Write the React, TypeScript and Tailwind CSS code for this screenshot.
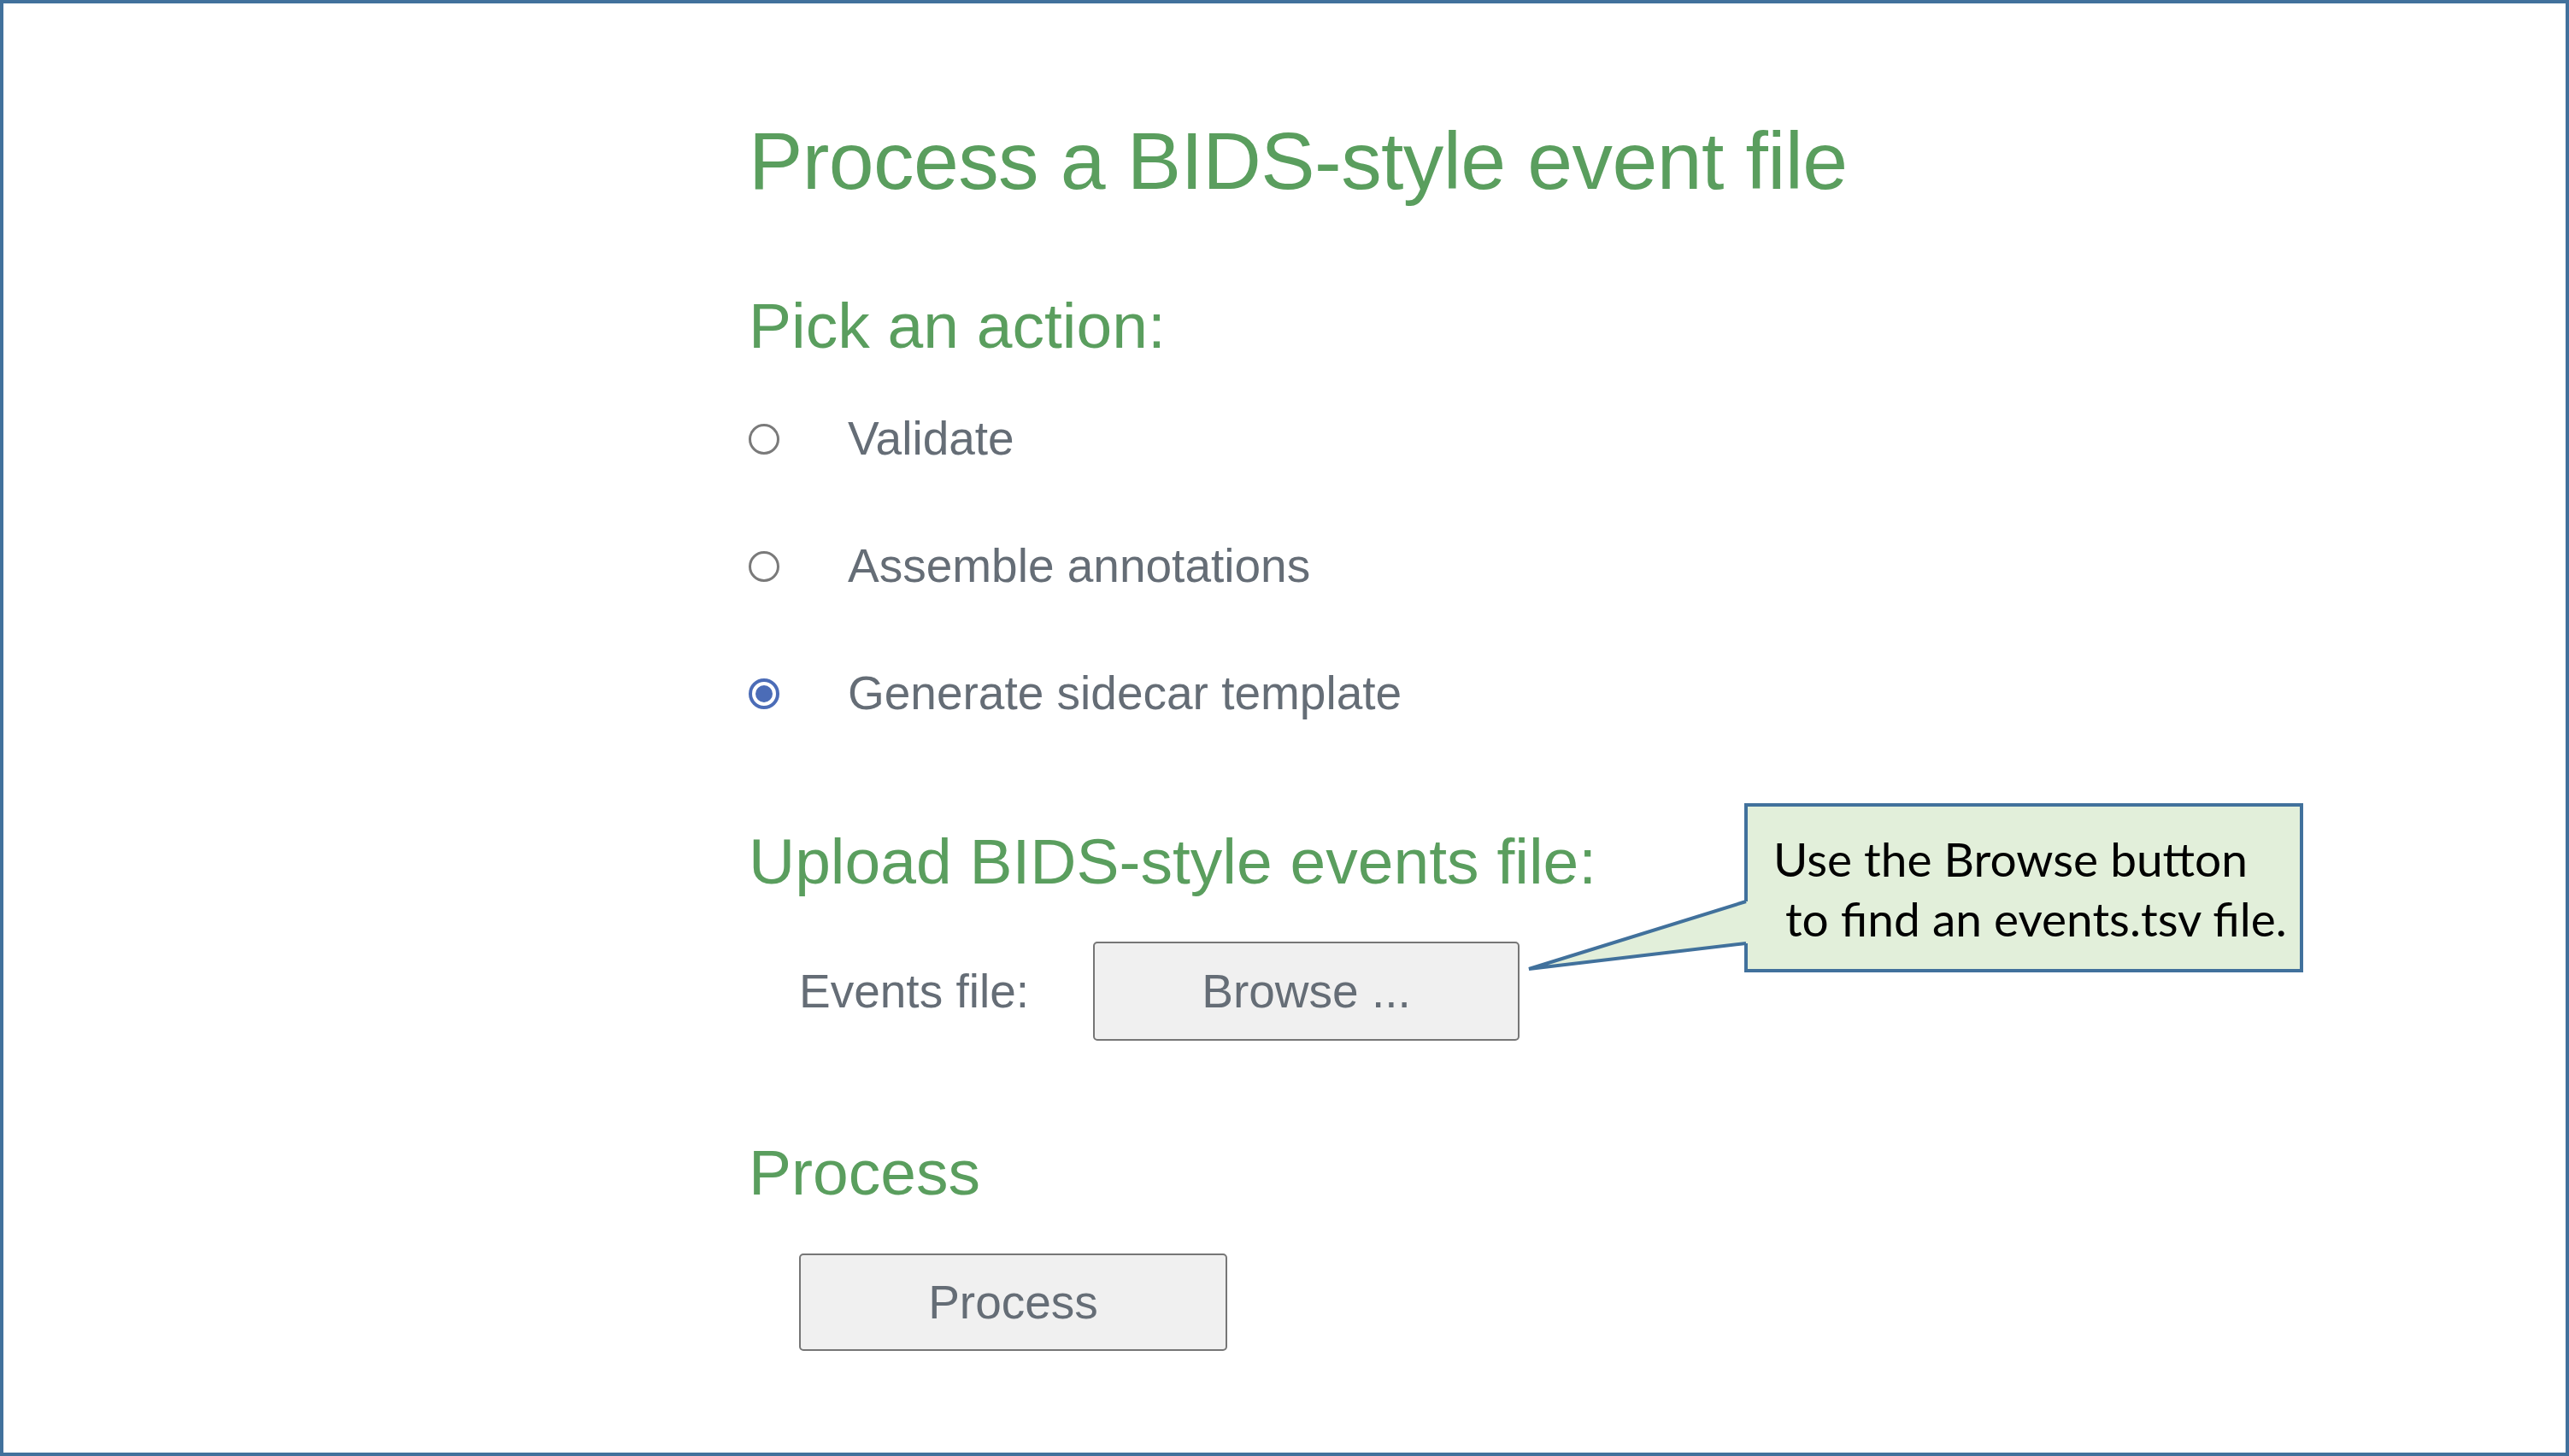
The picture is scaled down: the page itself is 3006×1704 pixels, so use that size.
import React from 'react'

const actions = [
  { label: 'Validate', checked: false },
  { label: 'Assemble annotations', checked: false },
  { label: 'Generate sidecar template', checked: true },
]

function Radio({ checked }: { checked: boolean }) {
  if (checked) {
    return (
      <span className="w-[36px] h-[36px] rounded-full border-4 border-[#4b6cb7] bg-white flex items-center justify-center shrink-0">
        <span className="w-[20px] h-[20px] rounded-full bg-[#4b6cb7]" />
      </span>
    )
  }
  return <span className="w-[36px] h-[36px] rounded-full border-[3px] border-[#7a7a7a] bg-white shrink-0" />
}

export default function App() {
  return (
    <div className="relative w-[3006px] h-[1704px] border-4 border-[#41719c] bg-white overflow-hidden font-['Liberation_Sans',Arial,sans-serif]">
      <div className="flex flex-col items-start pl-[872px] pt-[137px]">
        <h1 className="text-[95px] leading-none text-[#5a9e5e] tracking-[-0.6px]">Process a BIDS-style event file</h1>

        <h2 className="mt-[108px] text-[75px] leading-none text-[#5a9e5e]">Pick an action:</h2>

        <div className="mt-[67px] flex flex-col gap-[94px]">
          {actions.map((a) => (
            <label key={a.label} className="flex items-center h-[55px]">
              <Radio checked={a.checked} />
              <span className="ml-[80px] text-[55px] leading-none text-[#656d76]">{a.label}</span>
            </label>
          ))}
        </div>

        <h2 className="mt-[132px] text-[75px] leading-none text-[#5a9e5e]">Upload BIDS-style events file:</h2>

        <div className="mt-[56px] pl-[59px] flex items-center">
          <span className="w-[344px] text-[55px] leading-none text-[#656d76]">Events file:</span>
          <button className="w-[499px] h-[116px] rounded-[5px] border-2 border-[#767676] bg-[#f0f0f0] text-[55px] leading-none text-[#656d76]">
            Browse ...
          </button>
        </div>

        <h2 className="mt-[117px] text-[75px] leading-none text-[#5a9e5e]">Process</h2>

        <button className="mt-[57px] ml-[59px] w-[501px] h-[114px] rounded-[5px] border-2 border-[#767676] bg-[#f0f0f0] text-[55px] leading-none text-[#656d76]">
          Process
        </button>
      </div>

      {/* callout */}
      <div className="absolute left-[2037px] top-[936px] w-[654px] h-[198px] border-4 border-[#41719c] bg-[#e2efda] pt-[26px] pl-[30px] font-['Lato',sans-serif] text-[55px] leading-[70px] text-black">
        <div>Use the Browse button</div>
        <div className="pl-[14px]">to find an events.tsv file.</div>
      </div>
      <svg className="absolute left-[1776px] top-[1041px]" width="275" height="100" viewBox="0 0 275 100">
        <polygon points="9,89 263,10 268,10 268,59 263,59" fill="#e2efda" />
        <polyline points="263,10 9,89 263,59" fill="none" stroke="#41719c" strokeWidth="4" />
      </svg>
    </div>
  )
}
